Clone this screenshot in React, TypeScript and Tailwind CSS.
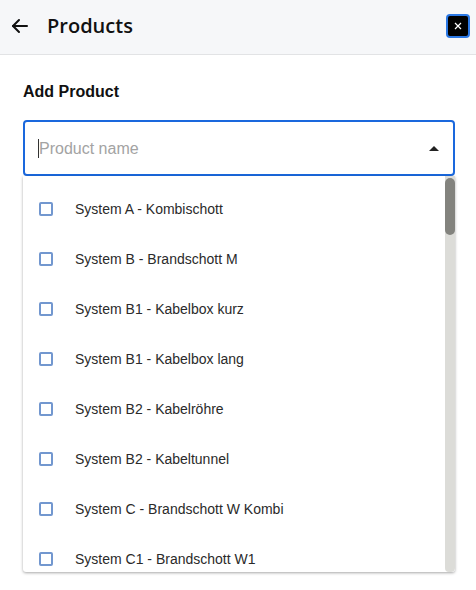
import React from 'react';

const products = [
  'System A - Kombischott',
  'System B - Brandschott M',
  'System B1 - Kabelbox kurz',
  'System B1 - Kabelbox lang',
  'System B2 - Kabelröhre',
  'System B2 - Kabeltunnel',
  'System C - Brandschott W Kombi',
  'System C1 - Brandschott W1',
];

const App: React.FC = () => {
  return (
    <div className="w-[476px] h-[590px] bg-white overflow-hidden">
      {/* top bar */}
      <div className="h-[55px] bg-[#f6f7f9] border-b border-[#e2e3e5] flex items-center pl-[10px] pr-[6px] pb-[2px]">
        <svg width="20" height="20" viewBox="0 0 20 20" fill="none" stroke="#111" strokeWidth="2" strokeLinecap="round" strokeLinejoin="round">
          <path d="M17 10H3" />
          <path d="M9 4L3 10L9 16" />
        </svg>
        <span className="ml-[17px] text-[20px] font-semibold text-[#111] font-['Open_Sans',sans-serif] leading-none">
          Products
        </span>
        <button className="ml-auto w-[24px] h-[24px] bg-black border-2 border-[#2b78e4] rounded-[4px] flex items-center justify-center">
          <svg width="8" height="8" viewBox="0 0 8 8" stroke="#fff" strokeWidth="1.2">
            <path d="M1 1L7 7M7 1L1 7" />
          </svg>
        </button>
      </div>

      <div className="pl-[23px] pr-[21px] pt-[28px] font-['Liberation_Sans',Arial,sans-serif]">
        <h2 className="text-[16px] font-bold text-[#111] leading-[18px]">Add Product</h2>

        <div className="mt-[19px] h-[56px] border-2 border-[#1a68dd] rounded-[4px] flex items-center pl-[13px] pr-[14px] pt-[1px]">
          <span className="w-[1px] h-[19px] bg-[#333]" />
          <span className="text-[16px] text-[#a3a3a3]">Product name</span>
          <svg className="ml-auto" width="10" height="5" viewBox="0 0 10 5">
            <path d="M0 5L5 0L10 5Z" fill="#222" />
          </svg>
        </div>

        {/* options list */}
        <div className="h-[396px] flex bg-white rounded-b-[3px] shadow-[0_1px_3px_rgba(0,0,0,0.35)] overflow-hidden">
          <ul className="flex-1 pt-[8px] overflow-hidden">
            {products.map((p) => (
              <li key={p} className="h-[50px] flex items-center pl-[16px]">
                <span className="w-[14px] h-[14px] border-2 border-[#7297cf] rounded-[2px]" />
                <span className="ml-[22px] text-[14px] text-[#2a2a2a]">{p}</span>
              </li>
            ))}
          </ul>
          <div className="w-[10px] bg-[#dcdcd8] pt-[2px] rounded-b-[4px]">
            <div className="h-[57px] bg-[#83837e] rounded-full" />
          </div>
        </div>
      </div>
    </div>
  );
};

export default App;
